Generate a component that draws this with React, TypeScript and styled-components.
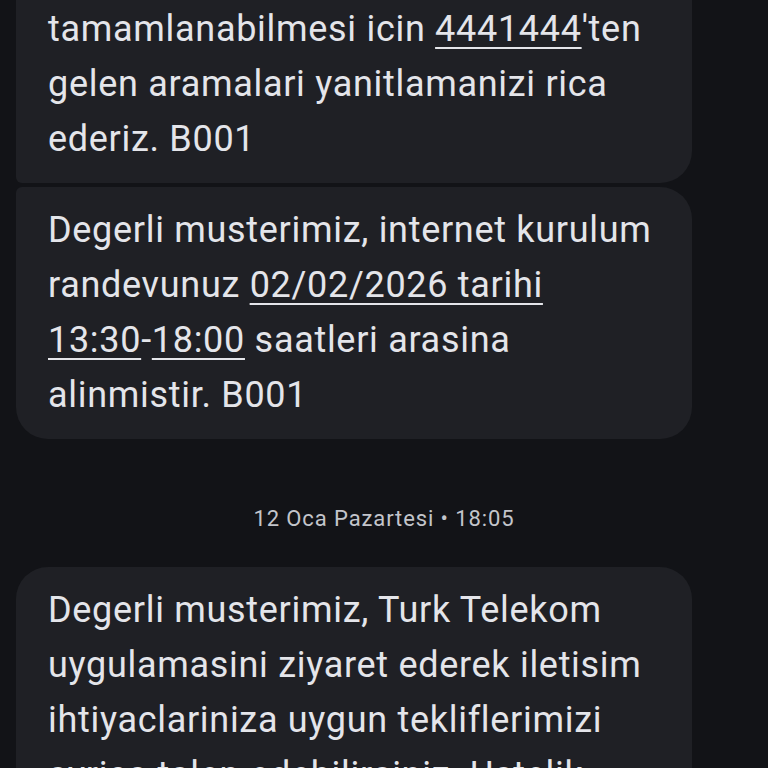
import React from 'react';
import styled, { createGlobalStyle } from 'styled-components';

const GlobalStyle = createGlobalStyle`
  html, body {
    margin: 0;
    padding: 0;
    background: #121317;
    overflow: hidden;
  }
  body {
    font-family: Roboto, 'Noto Sans', sans-serif;
  }
`;

const Screen = styled.div`
  width: 768px;
  height: 768px;
  overflow: hidden;
  background: #121317;
`;

const Thread = styled.div`
  display: flex;
  flex-direction: column;
  margin-top: -69px;
  padding: 0 76px 0 16px;
`;

type Corners = { top?: 'small' | 'large'; bottom?: 'small' | 'large' };

const Bubble = styled.div<{ $corners: Corners; $gap?: number }>`
  background: #1f2025;
  color: #e4e5ea;
  font-size: 36px;
  line-height: 55px;
  letter-spacing: 0.7px;
  padding: 16px 32px;
  white-space: nowrap;
  margin-top: ${(p) => p.$gap ?? 0}px;
  border-radius: ${(p) => (p.$corners.top === 'small' ? 6 : 32)}px 32px 32px
    ${(p) => (p.$corners.bottom === 'small' ? 6 : 32)}px;
`;

const Link = styled.span`
  text-decoration: underline;
  text-decoration-thickness: 2px;
  text-underline-offset: 6px;
`;

const DateStamp = styled.div`
  text-align: center;
  color: #c3c5cb;
  font-size: 22px;
  line-height: 28px;
  letter-spacing: 0.9px;
  margin: 66px 0 34px 60px;
`;

export default function App() {
  return (
    <Screen>
      <GlobalStyle />
      <Thread>
        <Bubble $corners={{ top: 'large', bottom: 'small' }}>
          Degerli musterimiz, kurulumunun
          <br />
          tamamlanabilmesi icin <Link>4441444</Link>'ten
          <br />
          gelen aramalari yanitlamanizi rica
          <br />
          ederiz. B001
        </Bubble>
        <Bubble $corners={{ top: 'small', bottom: 'large' }} $gap={4}>
          Degerli musterimiz, internet kurulum
          <br />
          randevunuz <Link>02/02/2026 tarihi</Link>
          <br />
          <Link>13:30</Link>-<Link>18:00</Link> saatleri arasina
          <br />
          alinmistir. B001
        </Bubble>
        <DateStamp>12 Oca Pazartesi • 18:05</DateStamp>
        <Bubble $corners={{ top: 'large', bottom: 'large' }}>
          Degerli musterimiz, Turk Telekom
          <br />
          uygulamasini ziyaret ederek iletisim
          <br />
          ihtiyaclariniza uygun tekliflerimizi
          <br />
          ayrica talep edebilirsiniz. Ustelik
        </Bubble>
      </Thread>
    </Screen>
  );
}
